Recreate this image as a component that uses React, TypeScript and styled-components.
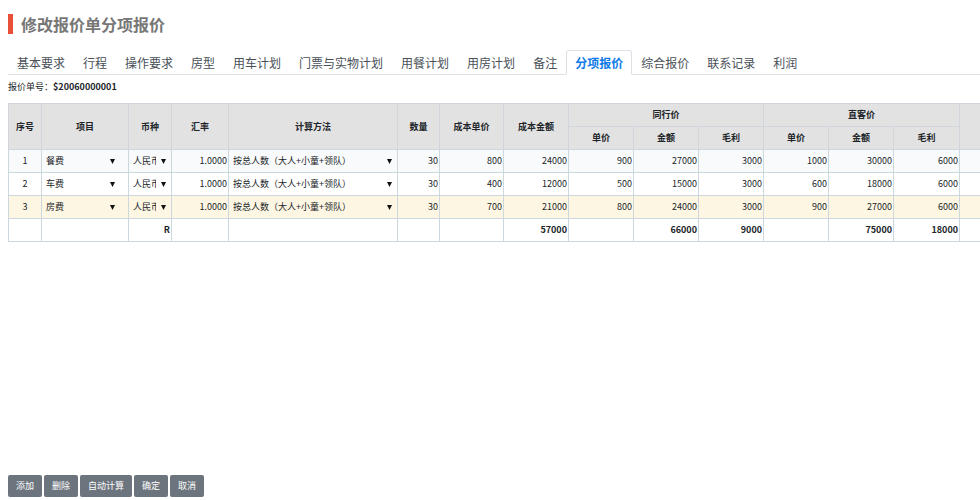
import React, { useState } from 'react';
import styled, { createGlobalStyle, css } from 'styled-components';

const GlobalStyle = createGlobalStyle`
  *, *::before, *::after { box-sizing: border-box; }
  body {
    margin: 0;
    background: #fff;
    color: #212529;
    font-family: "Noto Sans CJK SC", sans-serif;
    font-size: 9px;
    line-height: 12px;
  }
`;

const Page = styled.div`
  display: flex;
  flex-direction: column;
  min-height: 100vh;
  padding: 14px 0 3px 8px;
  overflow: hidden;
`;

const Title = styled.h1`
  margin: 0 0 16px;
  padding-left: 8px;
  border-left: 5px solid #e8503a;
  color: #777;
  font-size: 16px;
  font-weight: 700;
  line-height: 20px;
`;

const TabBar = styled.nav`
  display: flex;
  border-bottom: 1px solid #dee2e6;
`;

const Tab = styled.a<{ $active: boolean }>`
  margin-bottom: -1px;
  padding: 0 8px;
  border: 1px solid transparent;
  border-radius: 3px 3px 0 0;
  color: #495057;
  font-size: 12px;
  line-height: 23px;
  text-decoration: none;
  white-space: nowrap;
  ${({ $active }) =>
    $active &&
    css`
      border-color: #dee2e6 #dee2e6 #fff;
      background: #fff;
      color: #0f7be8;
      font-weight: 700;
    `}
`;

const QuoteNumber = styled.p`
  margin: 6px 0 10px;
`;

const TableScroller = styled.div`
  overflow: hidden;
`;

const Table = styled.table`
  width: 1060px;
  border-collapse: collapse;
  table-layout: fixed;
`;

const Col = styled.col<{ $width: number }>`
  width: ${({ $width }) => $width}px;
`;

const HeadCell = styled.th`
  height: 23px;
  padding: 0;
  border: 1px solid #d0d6dc;
  background: #e2e2e2;
  font-weight: 700;
`;

const Row = styled.tr<{ $tone?: 'striped' | 'selected' }>`
  background: ${({ $tone }) =>
    $tone === 'selected' ? '#fdf6e3' : $tone === 'striped' ? '#f9fafb' : '#fff'};
`;

const Cell = styled.td<{ $align?: 'left' | 'center' | 'right'; $bold?: boolean }>`
  height: 23px;
  padding: 0 1px 0 4px;
  border: 1px solid #cdd7de;
  text-align: ${({ $align = 'right' }) => $align};
  font-weight: ${({ $bold }) => ($bold ? 700 : 400)};
  white-space: nowrap;
`;

const IndexCell = styled(Cell)`
  padding: 0;
  text-align: center;
`;

const SelectBox = styled.span<{ $inset: number }>`
  display: grid;
  align-items: center;
  padding-right: ${({ $inset }) => $inset}px;
`;

const Select = styled.select`
  grid-area: 1 / 1;
  appearance: none;
  min-width: 0;
  width: 100%;
  margin: 0;
  padding: 0 10px 0 0;
  border: 0;
  background: transparent;
  color: #212529;
  font: inherit;
  text-overflow: clip;
`;

const Arrow = styled.svg`
  grid-area: 1 / 1;
  justify-self: end;
  width: 5px;
  height: 5px;
  pointer-events: none;
`;

const Actions = styled.footer`
  display: flex;
  gap: 2px;
  margin-top: auto;
`;

const Button = styled.button`
  height: 22px;
  padding: 0 8px;
  border: 0;
  border-radius: 2px;
  background: #6c757d;
  color: #fff;
  font: inherit;
  cursor: pointer;
`;

const tabs = [
  '基本要求', '行程', '操作要求', '房型', '用车计划', '门票与实物计划', '用餐计划',
  '用房计划', '备注', '分项报价', '综合报价', '联系记录', '利润',
];

const columnWidths = [33, 87, 43, 57, 169, 42, 64, 65, 65, 65, 65, 65, 65, 66, 109];

const items = ['餐费', '车费', '房费'];

interface Quote {
  item: string;
  tone?: 'striped' | 'selected';
  figures: number[];
}

const quotes: Quote[] = [
  { item: '餐费', tone: 'striped', figures: [30, 800, 24000, 900, 27000, 3000, 1000, 30000, 6000] },
  { item: '车费', figures: [30, 400, 12000, 500, 15000, 3000, 600, 18000, 6000] },
  { item: '房费', tone: 'selected', figures: [30, 700, 21000, 800, 24000, 3000, 900, 27000, 6000] },
];

const totals = ['', '', 'R', '', '', '', '', '57000', '', '66000', '9000', '', '75000', '18000', ''];

interface DropDownProps {
  label: string;
  options: string[];
  initial: string;
  inset?: number;
}

function DropDown({ label, options, initial, inset = 4 }: DropDownProps) {
  return (
    <SelectBox $inset={inset}>
      <Select aria-label={label} defaultValue={initial}>
        {options.map((option) => (
          <option key={option}>{option}</option>
        ))}
      </Select>
      <Arrow viewBox="0 0 5 5" aria-hidden="true">
        <path d="M0 0h5L2.5 5z" fill="#111" />
      </Arrow>
    </SelectBox>
  );
}

export default function App() {
  const [active, setActive] = useState('分项报价');

  return (
    <>
      <GlobalStyle />
      <Page>
        <Title>修改报价单分项报价</Title>
        <TabBar>
          {tabs.map((tab) => (
            <Tab
              key={tab}
              href={`#${tab}`}
              $active={tab === active}
              aria-current={tab === active ? 'page' : undefined}
              onClick={() => setActive(tab)}
            >
              {tab}
            </Tab>
          ))}
        </TabBar>
        <QuoteNumber>
          报价单号：<strong>$20060000001</strong>
        </QuoteNumber>
        <TableScroller>
          <Table>
            <colgroup>
              {columnWidths.map((width, i) => (
                <Col key={i} $width={width} />
              ))}
            </colgroup>
            <thead>
              <tr>
                {['序号', '项目', '币种', '汇率', '计算方法', '数量', '成本单价', '成本金额'].map((name) => (
                  <HeadCell key={name} rowSpan={2}>{name}</HeadCell>
                ))}
                <HeadCell colSpan={3}>同行价</HeadCell>
                <HeadCell colSpan={3}>直客价</HeadCell>
                <HeadCell rowSpan={2} />
              </tr>
              <tr>
                {['单价', '金额', '毛利', '单价', '金额', '毛利'].map((name, i) => (
                  <HeadCell key={i}>{name}</HeadCell>
                ))}
              </tr>
            </thead>
            <tbody>
              {quotes.map((quote, i) => (
                <Row key={quote.item} $tone={quote.tone}>
                  <IndexCell>{i + 1}</IndexCell>
                  <Cell $align="left">
                    <DropDown label="项目" options={items} initial={quote.item} inset={12} />
                  </Cell>
                  <Cell $align="left">
                    <DropDown label="币种" options={['人民币']} initial="人民币" />
                  </Cell>
                  <Cell>1.0000</Cell>
                  <Cell $align="left">
                    <DropDown
                      label="计算方法"
                      options={['按总人数（大人+小童+领队）']}
                      initial="按总人数（大人+小童+领队）"
                    />
                  </Cell>
                  {quote.figures.map((figure, n) => (
                    <Cell key={n}>{figure}</Cell>
                  ))}
                  <Cell />
                </Row>
              ))}
            </tbody>
            <tfoot>
              <Row>
                {totals.map((total, i) => (
                  <Cell key={i} $bold>{total}</Cell>
                ))}
              </Row>
            </tfoot>
          </Table>
        </TableScroller>
        <Actions>
          {['添加', '删除', '自动计算', '确定', '取消'].map((name) => (
            <Button key={name} type="button">{name}</Button>
          ))}
        </Actions>
      </Page>
    </>
  );
}
